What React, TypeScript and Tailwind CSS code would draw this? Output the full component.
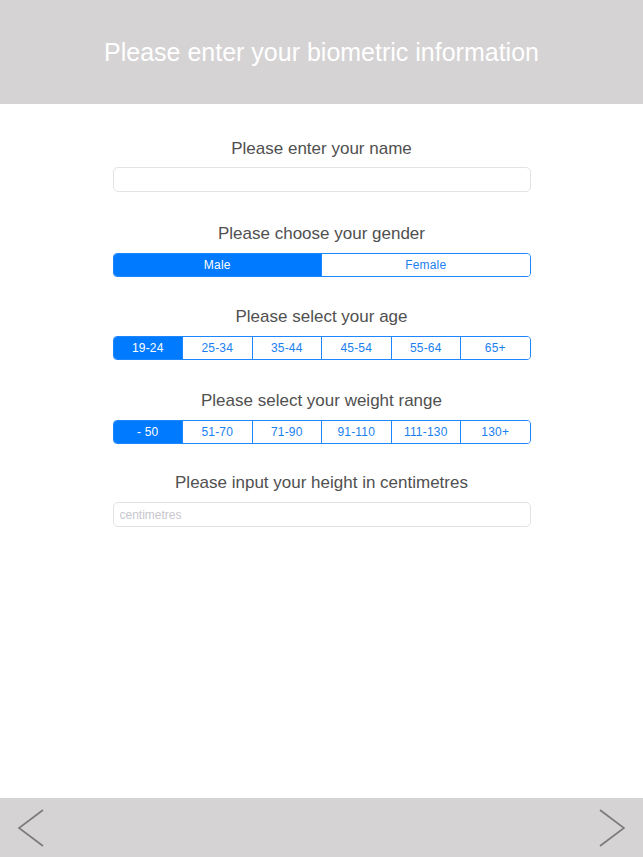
import { useState } from "react";

const AGES = ["19-24", "25-34", "35-44", "45-54", "55-64", "65+"];
const WEIGHTS = ["- 50", "51-70", "71-90", "91-110", "111-130", "130+"];

function Segmented({
    options,
    value,
    onChange,
}: {
    options: string[];
    value: number;
    onChange: (i: number) => void;
}) {
    return (
        <div className="flex h-[24px] w-full overflow-hidden rounded-[4px] border border-[#1c86ff]">
            {options.map((opt, i) => (
                <button
                    key={opt}
                    onClick={() => onChange(i)}
                    className={
                        "flex flex-1 items-center justify-center text-[12px] leading-none tracking-[0.2px] " +
                        (i > 0 ? "border-l border-[#1c86ff] " : "") +
                        (i === value ? "bg-[#007aff] text-white" : "bg-white text-[#1a7ff0]")
                    }
                >
                    {opt}
                </button>
            ))}
        </div>
    );
}

function Label({ children, className = "" }: { children: React.ReactNode; className?: string }) {
    return (
        <p className={"text-center text-[17px] leading-[20px] text-[#505050] " + className}>
            {children}
        </p>
    );
}

export default function App() {
    const [gender, setGender] = useState(0);
    const [age, setAge] = useState(0);
    const [weight, setWeight] = useState(0);

    return (
        <div
            className="flex min-h-screen flex-col bg-white"
            style={{ fontFamily: '"Liberation Sans", Arial, sans-serif' }}
        >
            {/* Header */}
            <header className="flex h-[104px] items-center justify-center bg-[#d5d3d4]">
                <h1 className="pt-[2px] text-[25px] font-normal text-white">
                    Please enter your biometric information
                </h1>
            </header>

            {/* Form */}
            <main className="flex-1">
                <div className="mx-auto w-[418px] pt-[35px]">
                    <Label>Please enter your name</Label>
                    <input
                        type="text"
                        className="mt-[8px] block h-[25px] w-full rounded-[5px] border border-[#e3e3e3] px-[6px] text-[12px] outline-none"
                    />

                    <Label className="mt-[32px]">Please choose your gender</Label>
                    <div className="mt-[9px]">
                        <Segmented options={["Male", "Female"]} value={gender} onChange={setGender} />
                    </div>

                    <Label className="mt-[30px]">Please select your age</Label>
                    <div className="mt-[9px]">
                        <Segmented options={AGES} value={age} onChange={setAge} />
                    </div>

                    <Label className="mt-[31px]">Please select your weight range</Label>
                    <div className="mt-[9px]">
                        <Segmented options={WEIGHTS} value={weight} onChange={setWeight} />
                    </div>

                    <Label className="mt-[29px]">Please input your height in centimetres</Label>
                    <input
                        type="text"
                        placeholder="centimetres"
                        className="mt-[9px] block h-[25px] w-full rounded-[5px] border border-[#e3e3e3] px-[6px] text-[12px] outline-none placeholder:text-[#c7c7cd]"
                    />
                </div>
            </main>

            {/* Footer nav */}
            <footer className="flex h-[59px] items-center justify-between bg-[#d5d3d4] px-[17px]">
                <button aria-label="Back">
                    <svg width="28" height="40" viewBox="0 0 28 40" fill="none">
                        <path d="M26 2 L2 20 L26 38" stroke="#7a7a7a" strokeWidth="1.6" />
                    </svg>
                </button>
                <button aria-label="Next">
                    <svg width="28" height="40" viewBox="0 0 28 40" fill="none">
                        <path d="M2 2 L26 20 L2 38" stroke="#7a7a7a" strokeWidth="1.6" />
                    </svg>
                </button>
            </footer>
        </div>
    );
}
